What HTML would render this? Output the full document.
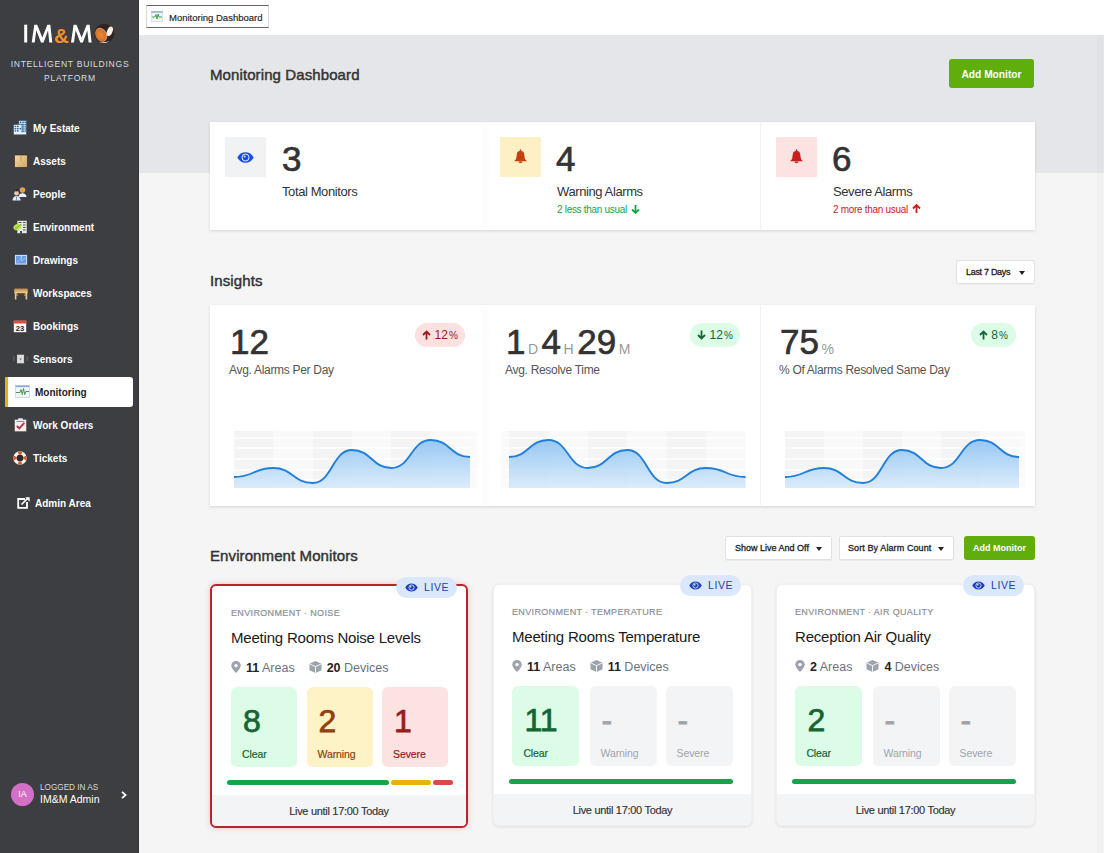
<!DOCTYPE html>
<html><head><meta charset="utf-8">
<style>
*{box-sizing:border-box;margin:0;padding:0}
html,body{width:1104px;height:853px;overflow:hidden}
body{font-family:"Liberation Sans",sans-serif;background:#f5f5f5;position:relative;color:#333}
.abs{position:absolute}
#side{left:0;top:0;width:139px;height:853px;background:#3d3e42;box-shadow:inset -1px 0 0 #333437}
#topbar{left:139px;top:0;width:965px;height:35px;background:#fff;box-shadow:0 1px 1px rgba(0,0,0,.06)}
#band{left:139px;top:35px;width:965px;height:138px;background:#e5e6e9}
.nav{position:absolute;left:0;width:139px;height:20px;color:#fff;font-weight:bold;font-size:10px}
.nav .ic{position:absolute;left:14px;top:3px;width:13px;height:13px}
.nav .tx{position:absolute;left:33px;top:5px;white-space:nowrap}
.card{position:absolute;background:#fff;box-shadow:0 1px 3px rgba(0,0,0,.13)}
.h2{position:absolute;font-size:15px;font-weight:normal;-webkit-text-stroke:0.45px #333;color:#333;white-space:nowrap;letter-spacing:0.1px}
.btn-green{position:absolute;background:#5fae0b;color:#fff;font-weight:bold;font-size:10.5px;border-radius:3px;text-align:center}
.sel{position:absolute;background:#fff;border-radius:2px;border:1px solid #e2e2e4;box-shadow:0 1px 1px rgba(0,0,0,.04);font-size:9px;color:#222;white-space:nowrap}
.sel .st{position:absolute;top:0;-webkit-text-stroke:0.3px #222}
.caret{position:absolute;width:0;height:0;border-left:3.5px solid transparent;border-right:3.5px solid transparent;border-top:4px solid #222}
.ibox{position:absolute;top:137px;width:41px;height:40px;border-radius:1px}
.bignum{position:absolute;top:138.5px;font-size:35px;font-weight:normal;-webkit-text-stroke:0.7px #333;color:#333;line-height:40px;white-space:nowrap}
.slab{position:absolute;top:184px;font-size:13px;letter-spacing:-0.4px;color:#333;white-space:nowrap;line-height:16px}
.ssub{position:absolute;top:203px;font-size:10px;letter-spacing:-0.3px;white-space:nowrap;line-height:13px}
.arr{margin-left:2px;vertical-align:-1px}
.inum{position:absolute;top:321.5px;font-size:35px;font-weight:normal;-webkit-text-stroke:0.7px #333;color:#333;line-height:40px;white-space:nowrap}
.unit{font-size:14px;font-weight:normal;-webkit-text-stroke:0;color:#999;margin:0 3.5px 0 2.5px}
.ilab{position:absolute;top:363px;font-size:12px;color:#555;white-space:nowrap;line-height:14px;letter-spacing:-0.3px}
.badge{position:absolute;top:323px;width:50px;height:24px;border-radius:12px;font-size:12px;line-height:24px;text-align:center;white-space:nowrap}
.badge svg{vertical-align:-1px}
.badge.red{background:#fde0e0;color:#9b1c1c}
.badge.grn{background:#dcfce7;color:#166534}
.mcard{position:absolute;background:#fff;border-radius:6px}
.mfoot{position:absolute;background:#f3f4f6;border-radius:0 0 5px 5px;text-align:center;font-size:11px;line-height:32px;color:#333;letter-spacing:-0.3px;-webkit-text-stroke:0.15px #333}
.live{position:absolute;width:61px;height:21px;border-radius:11px;background:#dbe8fc;color:#1e40af;font-size:10.5px;line-height:21px;white-space:nowrap;letter-spacing:0.6px}
.live svg{position:absolute;left:9px;top:6px}
.live span{position:absolute;left:28px;top:0}
.mcat{position:absolute;font-size:9px;color:#8b9199;letter-spacing:0.35px;-webkit-text-stroke:0.2px #8b9199;white-space:nowrap;line-height:12px}
.mtitle{position:absolute;font-size:15px;color:#1a1a1a;white-space:nowrap;line-height:18px;letter-spacing:-0.2px}
.mrow{position:absolute;font-size:12.5px;color:#6b7280;white-space:nowrap;line-height:14px}
.mrow b{color:#222}
.mrow svg{vertical-align:-1px}
.tile{position:absolute;width:67px;height:80px;border-radius:6px}
.tile .tn{position:absolute;left:12px;top:17px;font-size:32px;font-weight:normal;-webkit-text-stroke:0.75px currentColor;line-height:34px}
.tile .tl{position:absolute;left:11px;top:60px;font-size:10.5px;line-height:14px;letter-spacing:-0.1px}
.tg .tl,.ty .tl,.tr .tl{-webkit-text-stroke:0.2px currentColor}
.tg{background:#dcfce7;color:#166534}
.ty{background:#fef3c7;color:#92400e}
.tr{background:#fde2e2;color:#991b1b}
.tgr{background:#f3f4f6;color:#a0a4aa}
.bar{position:absolute;height:5px;border-radius:3px}
.nt{position:absolute;left:33px;font-size:10px;font-weight:bold;color:#fff;white-space:nowrap;line-height:11px}
.pc{font-size:10px;margin-left:1px}
</style></head>
<body>
<div id="side" class="abs">
  <!-- logo -->
  <svg class="abs" style="left:22px;top:22px" width="72" height="23" viewBox="0 0 72 23">
    <g fill="#fff">
      <rect x="2.2" y="2.7" width="3" height="17.8"/>
      <path d="M9.7 20.5L12.3 2.7H15.2L20.3 15.5L25.4 2.7H28.3L30.3 20.5H27.3L26 8.5L21.6 20.5H19L14.3 8.3L12.7 20.5z"/>
      <path d="M49 20.5L51.6 2.7H54.5L59.6 15.5L64.7 2.7H67.6L69.6 20.5H66.6L65.3 8.5L60.9 20.5H58.3L53.6 8.3L52 20.5z"/>
    </g>
    <text x="39.3" y="21" font-family="Liberation Sans" font-weight="bold" font-size="20.5" fill="#f0922b" text-anchor="middle">&amp;</text>
  </svg>
  <svg class="abs" style="left:94px;top:23px" width="21" height="21" viewBox="0 0 21 21">
    <defs><radialGradient id="gl" cx="0.45" cy="0.5" r="0.6"><stop offset="0" stop-color="#e88a3c"/><stop offset="0.7" stop-color="#d4742c"/><stop offset="1" stop-color="#f0c8a0"/></radialGradient></defs>
    <circle cx="10.4" cy="10.5" r="9.8" fill="#2e2424"/>
    <ellipse cx="7.2" cy="11.8" rx="5.6" ry="7.3" transform="rotate(-28 7.2 11.8)" fill="url(#gl)"/>
    <ellipse cx="15.8" cy="8.3" rx="2.7" ry="5" transform="rotate(22 15.8 8.3)" fill="#f6efe8"/>
    <path d="M5 19c3 1.6 7.5 1.6 10.5-.8-2.5.6-6.5 1.2-10.5.8z" fill="#c8ccd4"/>
  </svg>
  <div class="abs" style="left:0;top:58px;width:139px;text-align:center;color:#dcdcdc;font-size:8.6px;letter-spacing:0.7px;line-height:13.5px;padding-left:1px">INTELLIGENT BUILDINGS<br>PLATFORM</div>
  <div class="abs" style="left:13px;top:120px;line-height:0"><svg width="14" height="15" viewBox="0 0 14 15"><rect x="5.6" y="0.4" width="8" height="14.2" fill="#b9dcfa" stroke="#1f2f48" stroke-width="0.5"/><rect x="0.4" y="4.4" width="8.6" height="10.2" fill="#d8ecfc" stroke="#1f2f48" stroke-width="0.5"/><g fill="#2f5f9c"><rect x="1.6" y="5.8" width="1.6" height="1.3"/><rect x="4" y="5.8" width="1.6" height="1.3"/><rect x="1.6" y="8" width="1.6" height="1.3"/><rect x="4" y="8" width="1.6" height="1.3"/><rect x="1.6" y="10.2" width="1.6" height="1.3"/><rect x="4" y="10.2" width="1.6" height="1.3"/><rect x="6.7" y="1.8" width="1.5" height="1.3"/><rect x="9.3" y="1.8" width="1.5" height="1.3"/><rect x="11.6" y="1.8" width="1.2" height="1.3"/><rect x="9.3" y="4" width="1.5" height="1.3"/><rect x="11.6" y="4" width="1.2" height="1.3"/><rect x="6.7" y="8" width="1.5" height="1.3"/><rect x="9.3" y="6.2" width="1.5" height="1.3"/><rect x="11.6" y="6.2" width="1.2" height="1.3"/><rect x="9.3" y="8.4" width="1.5" height="1.3"/><rect x="11.6" y="8.4" width="1.2" height="1.3"/><rect x="9.3" y="10.6" width="1.5" height="1.3"/><rect x="11.6" y="10.6" width="1.2" height="1.3"/></g><rect x="1" y="12.5" width="12" height="1.8" fill="#eef6fd"/></svg></div><div class="nt" style="top:123px">My Estate</div>
  <div class="abs" style="left:14px;top:154px;line-height:0"><svg width="14" height="14" viewBox="0 0 14 14"><defs><linearGradient id="ga" x1="0" y1="0" x2="1" y2="1"><stop offset="0" stop-color="#f6dca6"/><stop offset="1" stop-color="#d1a360"/></linearGradient></defs><rect x="0.5" y="1" width="13" height="12.5" rx="1" fill="url(#ga)" stroke="#3a2a12" stroke-width="0.7"/><path d="M7 1v6" stroke="#c99a58" stroke-width="1"/></svg></div><div class="nt" style="top:156px">Assets</div>
  <div class="abs" style="left:12px;top:186px;line-height:0"><svg width="16" height="15" viewBox="0 0 16 15"><circle cx="10.5" cy="4" r="2.8" fill="#e0a050"/><path d="M6.5 11c0-2.5 1.8-3.8 4-3.8s4 1.3 4 3.8z" fill="#f0f0ee"/><circle cx="4.5" cy="7.2" r="2.3" fill="#f2c9a0"/><path d="M4 5.2c.5-1.2 1.6-1.8 2.6-1.5" stroke="#222" stroke-width="1.2" fill="none"/><path d="M0.5 14.5c0-3 1.6-4.5 4-4.5s4 1.5 4 4.5z" fill="#dce9f7"/><path d="M4.5 10.5v4" stroke="#6a8fc0" stroke-width="0.9"/></svg></div><div class="nt" style="top:189px">People</div>
  <div class="abs" style="left:13px;top:220px;line-height:0"><svg width="15" height="14" viewBox="0 0 15 14"><rect x="4" y="0.5" width="10" height="13" fill="#e6eae2" stroke="#333" stroke-width="0.5"/><g fill="#4a4f48"><rect x="5.5" y="2" width="3" height="1"/><rect x="10" y="2" width="2.5" height="1"/><rect x="5.5" y="4.5" width="3" height="1"/><rect x="10" y="4.5" width="2.5" height="1"/><rect x="10" y="7" width="2.5" height="1"/><rect x="10" y="9.5" width="2.5" height="1"/><rect x="7" y="11" width="2" height="2.5"/></g><ellipse cx="4.3" cy="7" rx="4" ry="3" transform="rotate(-25 4.3 7)" fill="#b6e04c"/><path d="M1.5 9.5l5-4" stroke="#6f9a1e" stroke-width="0.7"/></svg></div><div class="nt" style="top:222px">Environment</div>
  <div class="abs" style="left:14px;top:254px;line-height:0"><svg width="14" height="12" viewBox="0 0 14 12"><rect x="0.5" y="0.5" width="13" height="10.5" fill="#c7defa" stroke="#1c2a44" stroke-width="0.6"/><rect x="2" y="2" width="10" height="7.5" fill="#6b9ce6"/><path d="M7.3 2v3.3" stroke="#d6e8fc" stroke-width="0.9"/><path d="M3 8.5l3-3 2 1.5 3-3" stroke="#a9c8f5" stroke-width="0.8" fill="none"/></svg></div><div class="nt" style="top:255px">Drawings</div>
  <div class="abs" style="left:14px;top:288px;line-height:0"><svg width="14" height="12" viewBox="0 0 14 12"><defs><linearGradient id="gw" x1="0" y1="0" x2="0" y2="1"><stop offset="0" stop-color="#b8844a"/><stop offset="1" stop-color="#f7d79a"/></linearGradient></defs><rect x="0.3" y="0.5" width="13.4" height="5" rx="0.8" fill="url(#gw)"/><rect x="0.8" y="5" width="1.6" height="6.5" fill="#e9c88f"/><rect x="11.6" y="5" width="1.6" height="6.5" fill="#e9c88f"/><rect x="2.5" y="5" width="1.2" height="2.8" fill="#d9b57a"/><rect x="10.3" y="5" width="1.2" height="2.8" fill="#d9b57a"/><rect x="3" y="5.3" width="8" height="1.2" fill="#5a4214"/></svg></div><div class="nt" style="top:288px">Workspaces</div>
  <div class="abs" style="left:13px;top:320px;line-height:0"><svg width="14" height="13" viewBox="0 0 14 13"><rect x="0.5" y="0.5" width="13" height="12" fill="#fafafa" stroke="#222" stroke-width="0.5"/><rect x="0.5" y="0.5" width="13" height="3" fill="#d4504a"/><text x="7" y="11" font-family="Liberation Sans" font-weight="bold" font-size="7.5" text-anchor="middle" fill="#1a1a1a">23</text></svg></div><div class="nt" style="top:321px">Bookings</div>
  <div class="abs" style="left:13px;top:354px;line-height:0"><svg width="15" height="10" viewBox="0 0 15 10"><rect x="3.8" y="0.3" width="7.4" height="9.4" fill="#dcdcdc" stroke="#2a2a2a" stroke-width="0.5"/><rect x="0" y="2" width="1.6" height="5" rx="0.8" fill="#5a5b5d"/><rect x="13.4" y="2" width="1.6" height="5" rx="0.8" fill="#5a5b5d"/><path d="M6.5 4.5l1 2 1-2z" fill="#666"/></svg></div><div class="nt" style="top:354px">Sensors</div>
  <div class="abs" style="left:14px;top:418px;line-height:0"><svg width="13" height="14" viewBox="0 0 13 14"><rect x="0.5" y="1.3" width="12" height="12.4" fill="#f4eeee" stroke="#5a4a3a" stroke-width="0.6"/><rect x="4" y="0.3" width="5" height="2.2" rx="1" fill="#e6e6e6"/><path d="M2.5 3.5h8" stroke="#6a7a9a" stroke-width="0.8"/><path d="M2.8 8l2.5 2.3 5-5.5" stroke="#b8384a" stroke-width="2" fill="none"/></svg></div><div class="nt" style="top:420px">Work Orders</div>
  <div class="abs" style="left:13px;top:451px;line-height:0"><svg width="14" height="14" viewBox="0 0 14 14"><circle cx="7" cy="7" r="5" fill="none" stroke="#f7f3f0" stroke-width="3.4"/><g stroke="#d4602a" stroke-width="3.4" fill="none"><path d="M5.3 2.3A5 5 0 0 1 8.7 2.3"/><path d="M5.3 11.7A5 5 0 0 0 8.7 11.7"/><path d="M2.3 5.3A5 5 0 0 0 2.3 8.7"/><path d="M11.7 5.3A5 5 0 0 1 11.7 8.7"/></g><circle cx="7" cy="7" r="3.1" fill="#2a2c30"/></svg></div><div class="nt" style="top:453px">Tickets</div>
  <div class="abs" style="left:5px;top:377px;width:128px;height:30px;background:#fff;border-left:3px solid #f5a623;border-radius:0 3px 3px 0"></div>
  <div class="abs" style="left:15px;top:385px;line-height:0"><svg width="15" height="13" viewBox="0 0 15 13"><rect x="0.5" y="0.5" width="14" height="12" fill="#eef5fb" stroke="#c9ccd4" stroke-width="0.7"/><rect x="0.5" y="0.5" width="14" height="1.6" fill="#8ea7d4"/><path d="M1 7.5h4l1-3 1.3 5 1.2-6 1.2 6 1.1-3h3.2" stroke="#3d8a3a" stroke-width="0.9" fill="none"/></svg></div><div class="nt" style="left:35px;top:387px;color:#222">Monitoring</div>
  <div class="abs" style="left:17px;top:497px;line-height:0"><svg width="13" height="12" viewBox="0 0 13 12"><path d="M8 2H1.2v8.8H10V5" stroke="#fff" stroke-width="1.8" fill="none"/><path d="M4.5 7.5L11 1" stroke="#fff" stroke-width="1.7"/><path d="M8.2 0.3h4.5v4.5z" fill="#fff"/></svg></div><div class="nt" style="left:35px;top:498px">Admin Area</div>
  <!-- user -->
  <div class="abs" style="left:11px;top:783px;width:23px;height:23px;border-radius:50%;background:#d36fc6;color:#fff;font-size:9px;text-align:center;line-height:23px">IA</div>
  <div class="abs" style="left:40px;top:783px;color:#d8d8d8;font-size:8.2px;white-space:nowrap;line-height:10px">LOGGED IN AS</div>
  <div class="abs" style="left:40px;top:793px;color:#fff;font-size:10.5px;white-space:nowrap;line-height:12px">IM&amp;M Admin</div>
  <svg class="abs" style="left:121px;top:791px" width="6" height="8" viewBox="0 0 6 8"><path d="M1 0.8L4.6 4 1 7.2" stroke="#fff" stroke-width="1.8" fill="none"/></svg>
</div>

<div id="topbar" class="abs">
  <div class="abs" style="left:7px;top:5px;width:123px;height:23px;border:1px solid #d8d8d8;border-top:1px solid #666;border-bottom:1px solid #666;background:#fff"></div>
  <svg class="abs" style="left:12px;top:11px" width="12" height="11" viewBox="0 0 12 11"><rect x="0.3" y="0.3" width="11.4" height="10.4" fill="#eef4f8" stroke="#d0d4dc" stroke-width="0.6"/><rect x="0.3" y="0.3" width="11.4" height="1.4" fill="#8fa8d8"/><path d="M1 6h3l1-2.5 1 4.5 1-5 1 3h3" stroke="#3a9a3a" stroke-width="0.9" fill="none"/></svg>
  <div class="abs" style="left:30px;top:12px;font-size:9.5px;line-height:11px;color:#222;white-space:nowrap;-webkit-text-stroke:0.15px #222">Monitoring Dashboard</div>
</div>

<div id="band" class="abs"></div>
<div class="h2" style="left:210px;top:66px">Monitoring Dashboard</div>
<div class="btn-green" style="left:949px;top:59px;width:85px;height:29px;line-height:31px;font-size:10.2px">Add Monitor</div>

<!-- summary card -->
<div class="card" style="left:210px;top:122px;width:825px;height:108px"></div>


<!-- summary contents -->
<div class="abs" style="left:481px;top:122px;width:8px;height:108px;background:#fdfdfd"></div>
<div class="abs" style="left:760px;top:122px;width:1px;height:108px;background:#f2f2f3"></div>
<div class="ibox" style="left:225px;background:#f1f2f4"><svg width="17" height="11" viewBox="0 0 17 11" style="position:absolute;left:12px;top:14.5px"><path d="M0.3 5.5C2.2 2 5 0.2 8.5 0.2S14.8 2 16.7 5.5C14.8 9 12 10.8 8.5 10.8S2.2 9 0.3 5.5z" fill="#1d4ed8"/><circle cx="8.5" cy="5.5" r="3.5" fill="none" stroke="#fff" stroke-width="0.9"/><circle cx="7.6" cy="4.6" r="1" fill="#cfe0ff"/></svg></div>
<div class="bignum" style="left:282px">3</div>
<div class="slab" style="left:282px">Total Monitors</div>

<div class="ibox" style="left:500px;background:#fdf0c4"><svg width="13" height="15" viewBox="0 0 13 15" style="position:absolute;left:14px;top:12px"><path d="M6.5 0.3c.5 0 .7.4.7.9v.9c1.6.3 2.6 1 2.9 2.6l.8 5.2 2 2.3H0.1l2-2.3.8-5.2c.3-1.6 1.3-2.3 2.9-2.6v-.9c0-.5.2-.9.7-.9z" fill="#c2410c"/><path d="M4.6 12.6h3.8c0 .9-.8 1.6-1.9 1.6s-1.9-.7-1.9-1.6z" fill="#c2410c"/></svg></div>
<div class="bignum" style="left:556px">4</div>
<div class="slab" style="left:557px">Warning Alarms</div>
<div class="ssub" style="left:557px;color:#17a34a">2 less than usual <svg class="arr" width="9" height="10" viewBox="0 0 9 10"><path d="M4.5 1v8M1 5.5l3.5 3.5 3.5-3.5" stroke="#17a34a" stroke-width="1.8" fill="none"/></svg></div>

<div class="ibox" style="left:776px;background:#fde2e2"><svg width="13" height="15" viewBox="0 0 13 15" style="position:absolute;left:14px;top:12px"><path d="M6.5 0.3c.5 0 .7.4.7.9v.9c1.6.3 2.6 1 2.9 2.6l.8 5.2 2 2.3H0.1l2-2.3.8-5.2c.3-1.6 1.3-2.3 2.9-2.6v-.9c0-.5.2-.9.7-.9z" fill="#c81e1e"/><path d="M4.6 12.6h3.8c0 .9-.8 1.6-1.9 1.6s-1.9-.7-1.9-1.6z" fill="#c81e1e"/></svg></div>
<div class="bignum" style="left:832px">6</div>
<div class="slab" style="left:833px">Severe Alarms</div>
<div class="ssub" style="left:833px;color:#c81e1e">2 more than usual <svg class="arr" width="9" height="10" viewBox="0 0 9 10"><path d="M4.5 9V1M1 4.5l3.5-3.5 3.5 3.5" stroke="#c81e1e" stroke-width="1.8" fill="none"/></svg></div>

<div class="h2" style="left:210px;top:271.5px">Insights</div>
<div class="sel" style="left:956px;top:260px;width:79px;height:24px;line-height:22px"><span class="st" style="left:9px;letter-spacing:-0.3px">Last 7 Days</span><div class="caret" style="left:62px;top:10px"></div></div>

<div class="card" style="left:210px;top:305px;width:825px;height:201px"></div>


<!-- insights contents -->
<div class="abs" style="left:481px;top:305px;width:8px;height:200px;background:#fdfdfd"></div>
<div class="abs" style="left:760px;top:305px;width:1px;height:200px;background:#f2f2f3"></div>
<div class="inum" style="left:230px">12</div>
<div class="ilab" style="left:229px">Avg. Alarms Per Day</div>
<div class="badge red" style="left:415px"><svg width="9" height="10" viewBox="0 0 9 10"><path d="M4.5 9.5V1.5M1 5l3.5-3.5L8 5" stroke="#9b1c1c" stroke-width="1.8" fill="none"/></svg> 12<span class="pc">%</span></div>
<svg class="abs chart" style="left:234px;top:431px" width="243" height="57" viewBox="0 0 243 57"><defs><linearGradient id="g1" x1="0" y1="0" x2="0" y2="1"><stop offset="0" stop-color="#8cc2f2" stop-opacity="0.9"/><stop offset="1" stop-color="#d6e9fb" stop-opacity="0.85"/></linearGradient></defs><rect x="0" y="0" width="243" height="57" fill="#fafafa"/><rect x="0.0" y="0" width="39.8" height="57" fill="#f4f4f5"/><rect x="39.3" y="0" width="39.8" height="57" fill="#f9f9f9"/><rect x="78.7" y="0" width="39.8" height="57" fill="#f4f4f5"/><rect x="118.0" y="0" width="39.8" height="57" fill="#f9f9f9"/><rect x="157.3" y="0" width="39.8" height="57" fill="#f4f4f5"/><rect x="196.7" y="0" width="39.8" height="57" fill="#f9f9f9"/><rect x="0" y="6" width="243" height="2" fill="#ffffff" opacity="0.6"/><rect x="0" y="16" width="243" height="2" fill="#ffffff" opacity="0.6"/><rect x="0" y="27" width="243" height="2" fill="#ffffff" opacity="0.6"/><rect x="0" y="38" width="243" height="2" fill="#ffffff" opacity="0.6"/><rect x="0" y="48" width="243" height="2" fill="#ffffff" opacity="0.6"/><path d="M0.0 46.0 C19.7 46.0 19.7 37.0 39.3 37.0 C59.0 37.0 59.0 52.0 78.7 52.0 C98.3 52.0 98.3 19.0 118.0 19.0 C137.7 19.0 137.7 37.0 157.3 37.0 C177.0 37.0 177.0 9.0 196.7 9.0 C216.3 9.0 216.3 26.0 236.0 26.0 L236.0 57 L0.0 57 Z" fill="url(#g1)"/><path d="M0.0 46.0 C19.7 46.0 19.7 37.0 39.3 37.0 C59.0 37.0 59.0 52.0 78.7 52.0 C98.3 52.0 98.3 19.0 118.0 19.0 C137.7 19.0 137.7 37.0 157.3 37.0 C177.0 37.0 177.0 9.0 196.7 9.0 C216.3 9.0 216.3 26.0 236.0 26.0" fill="none" stroke="#1f7fdb" stroke-width="1.9"/></svg>

<div class="inum" style="left:506px">1<span class="unit">D</span>4<span class="unit">H</span>29<span class="unit">M</span></div>
<div class="ilab" style="left:505px">Avg. Resolve Time</div>
<div class="badge grn" style="left:690px"><svg width="9" height="10" viewBox="0 0 9 10"><path d="M4.5 0.5V8.5M1 5l3.5 3.5L8 5" stroke="#166534" stroke-width="1.8" fill="none"/></svg> 12<span class="pc">%</span></div>
<svg class="abs chart" style="left:501px;top:431px" width="245" height="57" viewBox="0 0 245 57"><defs><linearGradient id="g2" x1="0" y1="0" x2="0" y2="1"><stop offset="0" stop-color="#8cc2f2" stop-opacity="0.9"/><stop offset="1" stop-color="#d6e9fb" stop-opacity="0.85"/></linearGradient></defs><rect x="0" y="0" width="245" height="57" fill="#fafafa"/><rect x="8.0" y="0" width="39.9" height="57" fill="#f4f4f5"/><rect x="47.4" y="0" width="39.9" height="57" fill="#f9f9f9"/><rect x="86.8" y="0" width="39.9" height="57" fill="#f4f4f5"/><rect x="126.2" y="0" width="39.9" height="57" fill="#f9f9f9"/><rect x="165.7" y="0" width="39.9" height="57" fill="#f4f4f5"/><rect x="205.1" y="0" width="39.9" height="57" fill="#f9f9f9"/><rect x="0" y="6" width="245" height="2" fill="#ffffff" opacity="0.6"/><rect x="0" y="16" width="245" height="2" fill="#ffffff" opacity="0.6"/><rect x="0" y="27" width="245" height="2" fill="#ffffff" opacity="0.6"/><rect x="0" y="38" width="245" height="2" fill="#ffffff" opacity="0.6"/><rect x="0" y="48" width="245" height="2" fill="#ffffff" opacity="0.6"/><path d="M8.0 26.0 C27.7 26.0 27.7 9.0 47.4 9.0 C67.1 9.0 67.1 37.0 86.8 37.0 C106.5 37.0 106.5 19.0 126.2 19.0 C146.0 19.0 146.0 52.0 165.7 52.0 C185.4 52.0 185.4 37.0 205.1 37.0 C224.8 37.0 224.8 46.0 244.5 46.0 L244.5 57 L8.0 57 Z" fill="url(#g2)"/><path d="M8.0 26.0 C27.7 26.0 27.7 9.0 47.4 9.0 C67.1 9.0 67.1 37.0 86.8 37.0 C106.5 37.0 106.5 19.0 126.2 19.0 C146.0 19.0 146.0 52.0 165.7 52.0 C185.4 52.0 185.4 37.0 205.1 37.0 C224.8 37.0 224.8 46.0 244.5 46.0" fill="none" stroke="#1f7fdb" stroke-width="1.9"/></svg>

<div class="inum" style="left:780px">75<span class="unit">%</span></div>
<div class="ilab" style="left:779px">% Of Alarms Resolved Same Day</div>
<div class="badge grn" style="left:971px;width:45px"><svg width="9" height="10" viewBox="0 0 9 10"><path d="M4.5 9.5V1.5M1 5l3.5-3.5L8 5" stroke="#166534" stroke-width="1.8" fill="none"/></svg> 8<span class="pc">%</span></div>
<svg class="abs chart" style="left:785px;top:431px" width="240" height="57" viewBox="0 0 240 57"><defs><linearGradient id="g3" x1="0" y1="0" x2="0" y2="1"><stop offset="0" stop-color="#8cc2f2" stop-opacity="0.9"/><stop offset="1" stop-color="#d6e9fb" stop-opacity="0.85"/></linearGradient></defs><rect x="0" y="0" width="240" height="57" fill="#fafafa"/><rect x="0.0" y="0" width="39.5" height="57" fill="#f4f4f5"/><rect x="39.0" y="0" width="39.5" height="57" fill="#f9f9f9"/><rect x="78.0" y="0" width="39.5" height="57" fill="#f4f4f5"/><rect x="117.0" y="0" width="39.5" height="57" fill="#f9f9f9"/><rect x="156.0" y="0" width="39.5" height="57" fill="#f4f4f5"/><rect x="195.0" y="0" width="39.5" height="57" fill="#f9f9f9"/><rect x="0" y="6" width="240" height="2" fill="#ffffff" opacity="0.6"/><rect x="0" y="16" width="240" height="2" fill="#ffffff" opacity="0.6"/><rect x="0" y="27" width="240" height="2" fill="#ffffff" opacity="0.6"/><rect x="0" y="38" width="240" height="2" fill="#ffffff" opacity="0.6"/><rect x="0" y="48" width="240" height="2" fill="#ffffff" opacity="0.6"/><path d="M0.0 46.0 C19.5 46.0 19.5 37.0 39.0 37.0 C58.5 37.0 58.5 52.0 78.0 52.0 C97.5 52.0 97.5 19.0 117.0 19.0 C136.5 19.0 136.5 37.0 156.0 37.0 C175.5 37.0 175.5 9.0 195.0 9.0 C214.5 9.0 214.5 26.0 234.0 26.0 L234.0 57 L0.0 57 Z" fill="url(#g3)"/><path d="M0.0 46.0 C19.5 46.0 19.5 37.0 39.0 37.0 C58.5 37.0 58.5 52.0 78.0 52.0 C97.5 52.0 97.5 19.0 117.0 19.0 C136.5 19.0 136.5 37.0 156.0 37.0 C175.5 37.0 175.5 9.0 195.0 9.0 C214.5 9.0 214.5 26.0 234.0 26.0" fill="none" stroke="#1f7fdb" stroke-width="1.9"/></svg>

<div class="h2" style="left:210px;top:547px">Environment Monitors</div>
<div class="sel" style="left:725px;top:536px;width:107px;height:24px;line-height:22px"><span class="st" style="left:9px;letter-spacing:0px">Show Live And Off</span><div class="caret" style="left:90px;top:10px"></div></div>
<div class="sel" style="left:839px;top:536px;width:115px;height:24px;line-height:22px"><span class="st" style="left:8px;letter-spacing:0.1px">Sort By Alarm Count</span><div class="caret" style="left:98px;top:10px"></div></div>
<div class="btn-green" style="left:964px;top:536px;width:71px;height:24px;line-height:24px;font-size:9px">Add Monitor</div>

<!-- env cards -->
<div class="mcard" style="left:210px;top:584px;width:258px;height:244px;border:2px solid #b9232c;box-shadow:0 0 6px rgba(200,40,40,.22)"></div>
<div class="mfoot" style="left:212px;top:795px;width:254px;height:31px">Live until 17:00 Today</div>
<div class="live" style="left:396px;top:577px"><svg width="13" height="9" viewBox="0 0 17 11"><path d="M0.3 5.5C2.2 2 5 0.2 8.5 0.2S14.8 2 16.7 5.5C14.8 9 12 10.8 8.5 10.8S2.2 9 0.3 5.5z" fill="#1e40c0"/><circle cx="8.5" cy="5.5" r="3.4" fill="none" stroke="#dbe8fc" stroke-width="1.1"/><circle cx="7.5" cy="4.5" r="1.1" fill="#dbe8fc"/></svg><span>LIVE</span></div>
<div class="mcat" style="left:231px;top:606.5px">ENVIRONMENT · NOISE</div>
<div class="mtitle" style="left:231px;top:629px">Meeting Rooms Noise Levels</div>
<div class="mrow" style="left:231px;top:661px"><svg width="10" height="12" viewBox="0 0 10 12"><path d="M5 0C2.3 0 0.3 2 0.3 4.6 0.3 7.8 5 12 5 12s4.7-4.2 4.7-7.4C9.7 2 7.7 0 5 0z" fill="#9ca3ab"/><circle cx="5" cy="4.6" r="1.7" fill="#fff"/></svg><b style="margin-left:5px">11</b> Areas<span style="display:inline-block;width:14px"></span><svg width="13" height="12" viewBox="0 0 13 12"><path d="M6.5 0L12.5 2.8V9.2L6.5 12L0.5 9.2V2.8z" fill="#9ca3ab"/><path d="M0.9 3L6.5 5.6L12.1 3" stroke="#fff" stroke-width="0.9" fill="none"/><path d="M6.5 5.6V11.8" stroke="#fff" stroke-width="0.9"/></svg><b style="margin-left:5px">20</b> Devices</div>
<div class="tile tg" style="left:231px;top:687px;width:66px"><div class="tn">8</div><div class="tl">Clear</div></div>
<div class="tile ty" style="left:306.5px;top:687px;width:66px"><div class="tn">2</div><div class="tl">Warning</div></div>
<div class="tile tr" style="left:382px;top:687px;width:66px"><div class="tn">1</div><div class="tl">Severe</div></div>
<div class="bar" style="left:227px;top:780px;width:162px;background:#16a34a"></div>
<div class="bar" style="left:391px;top:780px;width:40px;background:#eab308"></div>
<div class="bar" style="left:433px;top:780px;width:20px;background:#dc4848"></div>
<div class="mcard" style="left:493px;top:584px;width:259px;height:242px;border:1px solid #f0f0f2;box-shadow:0 1px 3px rgba(0,0,0,.10)"></div>
<div class="mfoot" style="left:494px;top:794px;width:257px;height:31px">Live until 17:00 Today</div>
<div class="live" style="left:680px;top:575px"><svg width="13" height="9" viewBox="0 0 17 11"><path d="M0.3 5.5C2.2 2 5 0.2 8.5 0.2S14.8 2 16.7 5.5C14.8 9 12 10.8 8.5 10.8S2.2 9 0.3 5.5z" fill="#1e40c0"/><circle cx="8.5" cy="5.5" r="3.4" fill="none" stroke="#dbe8fc" stroke-width="1.1"/><circle cx="7.5" cy="4.5" r="1.1" fill="#dbe8fc"/></svg><span>LIVE</span></div>
<div class="mcat" style="left:512px;top:605.5px">ENVIRONMENT · TEMPERATURE</div>
<div class="mtitle" style="left:512px;top:628px">Meeting Rooms Temperature</div>
<div class="mrow" style="left:512px;top:660px"><svg width="10" height="12" viewBox="0 0 10 12"><path d="M5 0C2.3 0 0.3 2 0.3 4.6 0.3 7.8 5 12 5 12s4.7-4.2 4.7-7.4C9.7 2 7.7 0 5 0z" fill="#9ca3ab"/><circle cx="5" cy="4.6" r="1.7" fill="#fff"/></svg><b style="margin-left:5px">11</b> Areas<span style="display:inline-block;width:14px"></span><svg width="13" height="12" viewBox="0 0 13 12"><path d="M6.5 0L12.5 2.8V9.2L6.5 12L0.5 9.2V2.8z" fill="#9ca3ab"/><path d="M0.9 3L6.5 5.6L12.1 3" stroke="#fff" stroke-width="0.9" fill="none"/><path d="M6.5 5.6V11.8" stroke="#fff" stroke-width="0.9"/></svg><b style="margin-left:5px">11</b> Devices</div>
<div class="tile tg" style="left:512.4px;top:686px;width:67px"><div class="tn">11</div><div class="tl">Clear</div></div>
<div class="tile tgr" style="left:589.5px;top:686px;width:67px"><div class="tn">-</div><div class="tl">Warning</div></div>
<div class="tile tgr" style="left:665.5px;top:686px;width:67px"><div class="tn">-</div><div class="tl">Severe</div></div>
<div class="bar" style="left:509px;top:779px;width:224px;background:#16a34a"></div>
<div class="mcard" style="left:776px;top:584px;width:259px;height:242px;border:1px solid #f0f0f2;box-shadow:0 1px 3px rgba(0,0,0,.10)"></div>
<div class="mfoot" style="left:777px;top:794px;width:257px;height:31px">Live until 17:00 Today</div>
<div class="live" style="left:963px;top:575px"><svg width="13" height="9" viewBox="0 0 17 11"><path d="M0.3 5.5C2.2 2 5 0.2 8.5 0.2S14.8 2 16.7 5.5C14.8 9 12 10.8 8.5 10.8S2.2 9 0.3 5.5z" fill="#1e40c0"/><circle cx="8.5" cy="5.5" r="3.4" fill="none" stroke="#dbe8fc" stroke-width="1.1"/><circle cx="7.5" cy="4.5" r="1.1" fill="#dbe8fc"/></svg><span>LIVE</span></div>
<div class="mcat" style="left:795px;top:605.5px">ENVIRONMENT · AIR QUALITY</div>
<div class="mtitle" style="left:795px;top:628px">Reception Air Quality</div>
<div class="mrow" style="left:795px;top:660px"><svg width="10" height="12" viewBox="0 0 10 12"><path d="M5 0C2.3 0 0.3 2 0.3 4.6 0.3 7.8 5 12 5 12s4.7-4.2 4.7-7.4C9.7 2 7.7 0 5 0z" fill="#9ca3ab"/><circle cx="5" cy="4.6" r="1.7" fill="#fff"/></svg><b style="margin-left:5px">2</b> Areas<span style="display:inline-block;width:14px"></span><svg width="13" height="12" viewBox="0 0 13 12"><path d="M6.5 0L12.5 2.8V9.2L6.5 12L0.5 9.2V2.8z" fill="#9ca3ab"/><path d="M0.9 3L6.5 5.6L12.1 3" stroke="#fff" stroke-width="0.9" fill="none"/><path d="M6.5 5.6V11.8" stroke="#fff" stroke-width="0.9"/></svg><b style="margin-left:5px">4</b> Devices</div>
<div class="tile tg" style="left:795.4px;top:686px;width:67px"><div class="tn">2</div><div class="tl">Clear</div></div>
<div class="tile tgr" style="left:872.5px;top:686px;width:67px"><div class="tn">-</div><div class="tl">Warning</div></div>
<div class="tile tgr" style="left:948.5px;top:686px;width:67px"><div class="tn">-</div><div class="tl">Severe</div></div>
<div class="bar" style="left:792px;top:779px;width:224px;background:#16a34a"></div>
<!-- /env cards -->
<div id="rstrip" class="abs" style="left:1097px;top:35px;width:6px;height:818px;background:rgba(0,0,0,0.015)"></div>
</body></html>
